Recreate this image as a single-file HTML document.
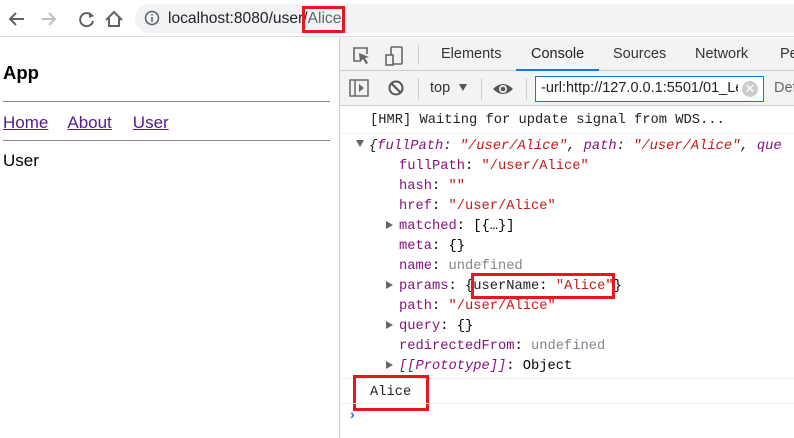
<!DOCTYPE html>
<html><head><style>
*{margin:0;padding:0;box-sizing:border-box}
body{width:794px;height:438px;overflow:hidden;background:#fff;font-family:"Liberation Sans",sans-serif;position:relative}
.a{position:absolute}
.m{font-family:"Liberation Mono",monospace;font-size:13.75px;white-space:pre;line-height:20px}
.k{color:#881280}.s{color:#c41a16}.g{color:#80868b}.t{color:#222}
.tri{display:inline-block;width:0;height:0;border-left:7px solid #666;border-top:4.5px solid transparent;border-bottom:4.5px solid transparent;margin-right:6px}
.sp{display:inline-block;width:13px}
.red{position:absolute;border:3px solid #e8161f}
</style></head><body>
<div class="a" style="left:0;top:0;width:794px;height:37px;border-bottom:1px solid #dadce0;background:#fff"></div>
<svg class="a" style="top:8px;left:6px" width="120" height="22" viewBox="0 0 120 22">
<path d="M18 11H5M10 5L4 11L10 17" stroke="#5f6368" stroke-width="2" fill="none"/>
<path d="M36 11H49M43 5L49 11L43 17" stroke="#bdc1c6" stroke-width="2" fill="none"/>
<path d="M86 8A6.5 6.5 0 1 0 87 13" stroke="#5f6368" stroke-width="2" fill="none"/><path d="M83 4L88 8L83 10Z" fill="#5f6368"/>
<path d="M100 12L108 4L116 12M103 10V18H113V10" stroke="#5f6368" stroke-width="2" fill="none"/>
</svg>
<div class="a" style="left:135px;top:4px;width:680px;height:29px;border-radius:15px;background:#f1f3f4"></div>
<svg class="a" style="left:144px;top:10px" width="16" height="16"><circle cx="8" cy="8" r="6.5" stroke="#5f6368" stroke-width="1.6" fill="none"/><rect x="7.2" y="7" width="1.6" height="5" fill="#5f6368"/><rect x="7.2" y="4" width="1.6" height="1.6" fill="#5f6368"/></svg>
<div class="a" style="left:168px;top:10px;font-size:15.6px;color:#202124">localhost<span>:8080/user/</span><span style="color:#5f6368">Alice</span></div>
<div class="red" style="left:302px;top:6px;width:43px;height:27px"></div>
<div class="a" style="left:3px;top:62px;font-size:18.5px;font-weight:bold">App</div>
<div class="a" style="left:3px;top:101px;width:327px;border-top:1px solid #888"></div>
<div class="a" style="left:3px;top:113px;font-size:17px;color:#551a8b"><u>Home</u><u style="margin-left:19px">About</u><u style="margin-left:21px">User</u></div>
<div class="a" style="left:3px;top:140px;width:327px;border-top:1px solid #888"></div>
<div class="a" style="left:3px;top:151px;font-size:17px">User</div>
<div class="a" style="left:339px;top:38px;width:455px;height:400px;border-left:1px solid #ccc"></div>
<div class="a" style="left:340px;top:38px;width:454px;height:33px;background:#f3f3f3;border-bottom:1px solid #ccc"></div>
<svg class="a" style="left:350px;top:45px" width="60" height="22"><path d="M11 16H4V3H17V9" stroke="#666" stroke-width="1.6" fill="none"/><path d="M9 8L19 12L15 13L18 18L16 19L13 14L10 17Z" fill="#666"/><rect x="41" y="2" width="11" height="17" stroke="#666" stroke-width="1.6" fill="none" rx="1"/><rect x="36" y="10" width="7" height="10" stroke="#666" stroke-width="1.6" fill="#f3f3f3"/></svg>
<div class="a" style="left:418px;top:45px;height:20px;border-left:1px solid #ccc"></div>
<div class="a" style="left:441px;top:46px;font-size:14.5px;color:#333">Elements</div>
<div class="a" style="left:531px;top:46px;font-size:14.5px;color:#222">Console</div>
<div class="a" style="left:516px;top:69px;width:83px;height:2px;background:#1a73e8"></div>
<div class="a" style="left:613px;top:46px;font-size:14.5px;color:#333">Sources</div>
<div class="a" style="left:695px;top:46px;font-size:14.5px;color:#333">Network</div>
<div class="a" style="left:780px;top:46px;font-size:14.5px;color:#333">Pe</div>
<div class="a" style="left:340px;top:71px;width:454px;height:35px;background:#f3f3f3;border-bottom:1px solid #ccc"></div>
<svg class="a" style="left:349px;top:78px" width="60" height="22"><rect x="1" y="2" width="18" height="16" stroke="#666" stroke-width="1.5" fill="none"/><line x1="6" y1="2" x2="6" y2="18" stroke="#666" stroke-width="1.5"/><path d="M10 6L15 10L10 14Z" fill="#666"/><circle cx="47" cy="10" r="6.5" stroke="#555" stroke-width="2" fill="none"/><line x1="42.5" y1="5.5" x2="51.5" y2="14.5" stroke="#555" stroke-width="2"/></svg>
<div class="a" style="left:418px;top:78px;height:22px;border-left:1px solid #ccc"></div>
<div class="a" style="left:430px;top:80px;font-size:14.5px;color:#333">top</div>
<div class="a" style="left:459px;top:84px;border-top:7px solid #555;border-left:4.5px solid transparent;border-right:4.5px solid transparent"></div>
<div class="a" style="left:481px;top:78px;height:22px;border-left:1px solid #ccc"></div>
<svg class="a" style="left:492px;top:81px" width="22" height="16"><path d="M1 8Q11 -2 21 8Q11 18 1 8Z" fill="#555"/><circle cx="11" cy="8" r="4" fill="#f3f3f3"/><circle cx="11" cy="8" r="2.3" fill="#555"/></svg>
<div class="a" style="left:526px;top:78px;height:22px;border-left:1px solid #ccc"></div>
<div class="a" style="left:535px;top:76px;width:229px;height:26px;border:1px solid #1a73e8;background:#fff"></div>
<div class="a" style="left:541px;top:80px;font-size:14.5px;color:#222;width:197px;overflow:hidden;white-space:nowrap">-url:http://127.0.0.1:5501/01_Le</div>
<div class="a" style="left:742px;top:81px;width:16px;height:16px;border-radius:50%;background:#ccc;color:#fff;font-size:13px;line-height:16px;text-align:center">✕</div>
<div class="a" style="left:774px;top:80px;font-size:14.5px;color:#666">Def</div>
<div class="a m t" style="left:370px;top:111px">[HMR] Waiting for update signal from WDS...</div>
<div class="a" style="left:340px;top:133px;width:454px;border-top:1px solid #f0f0f0"></div>
<div class="a m" style="left:370px;top:137px"><span class="tri" style="border-left:4.5px solid transparent;border-right:4.5px solid transparent;border-top:7px solid #666;border-bottom:0;vertical-align:2px;margin-left:-14px;margin-right:5px"></span><i class="t">{<span class="k">fullPath</span>: <span class="s">"/user/Alice"</span>, <span class="k">path</span>: <span class="s">"/user/Alice"</span>, <span class="k">que</span></i></div>
<div class="a m" style="left:386px;top:157px;line-height:20px"><span class="sp"></span><span class="k">fullPath</span>: <span class="s">"/user/Alice"</span>
<span class="sp"></span><span class="k">hash</span>: <span class="s">""</span>
<span class="sp"></span><span class="k">href</span>: <span class="s">"/user/Alice"</span>
<span class="tri"></span><span class="k">matched</span>: [{…}]
<span class="sp"></span><span class="k">meta</span>: {}
<span class="sp"></span><span class="k">name</span>: <span class="g">undefined</span>
<span class="tri"></span><span class="k">params</span>: {<span class="t">userName</span>: <span class="s">"Alice"</span>}
<span class="sp"></span><span class="k">path</span>: <span class="s">"/user/Alice"</span>
<span class="tri"></span><span class="k">query</span>: {}
<span class="sp"></span><span class="k">redirectedFrom</span>: <span class="g">undefined</span>
<span class="tri"></span><i class="k">[[Prototype]]</i>: Object</div>
<div class="red" style="left:471px;top:273px;width:144px;height:26px"></div>
<div class="a" style="left:340px;top:378px;width:454px;border-top:1px solid #eee"></div>
<div class="a m t" style="left:370px;top:383px">Alice</div>
<div class="red" style="left:353px;top:375px;width:76px;height:36px"></div>
<div class="a" style="left:340px;top:403px;width:454px;border-top:1px solid #eee"></div>
<div class="a" style="left:350px;top:406px;color:#1a73e8;font-size:14px;font-weight:bold">›</div>
</body></html>
